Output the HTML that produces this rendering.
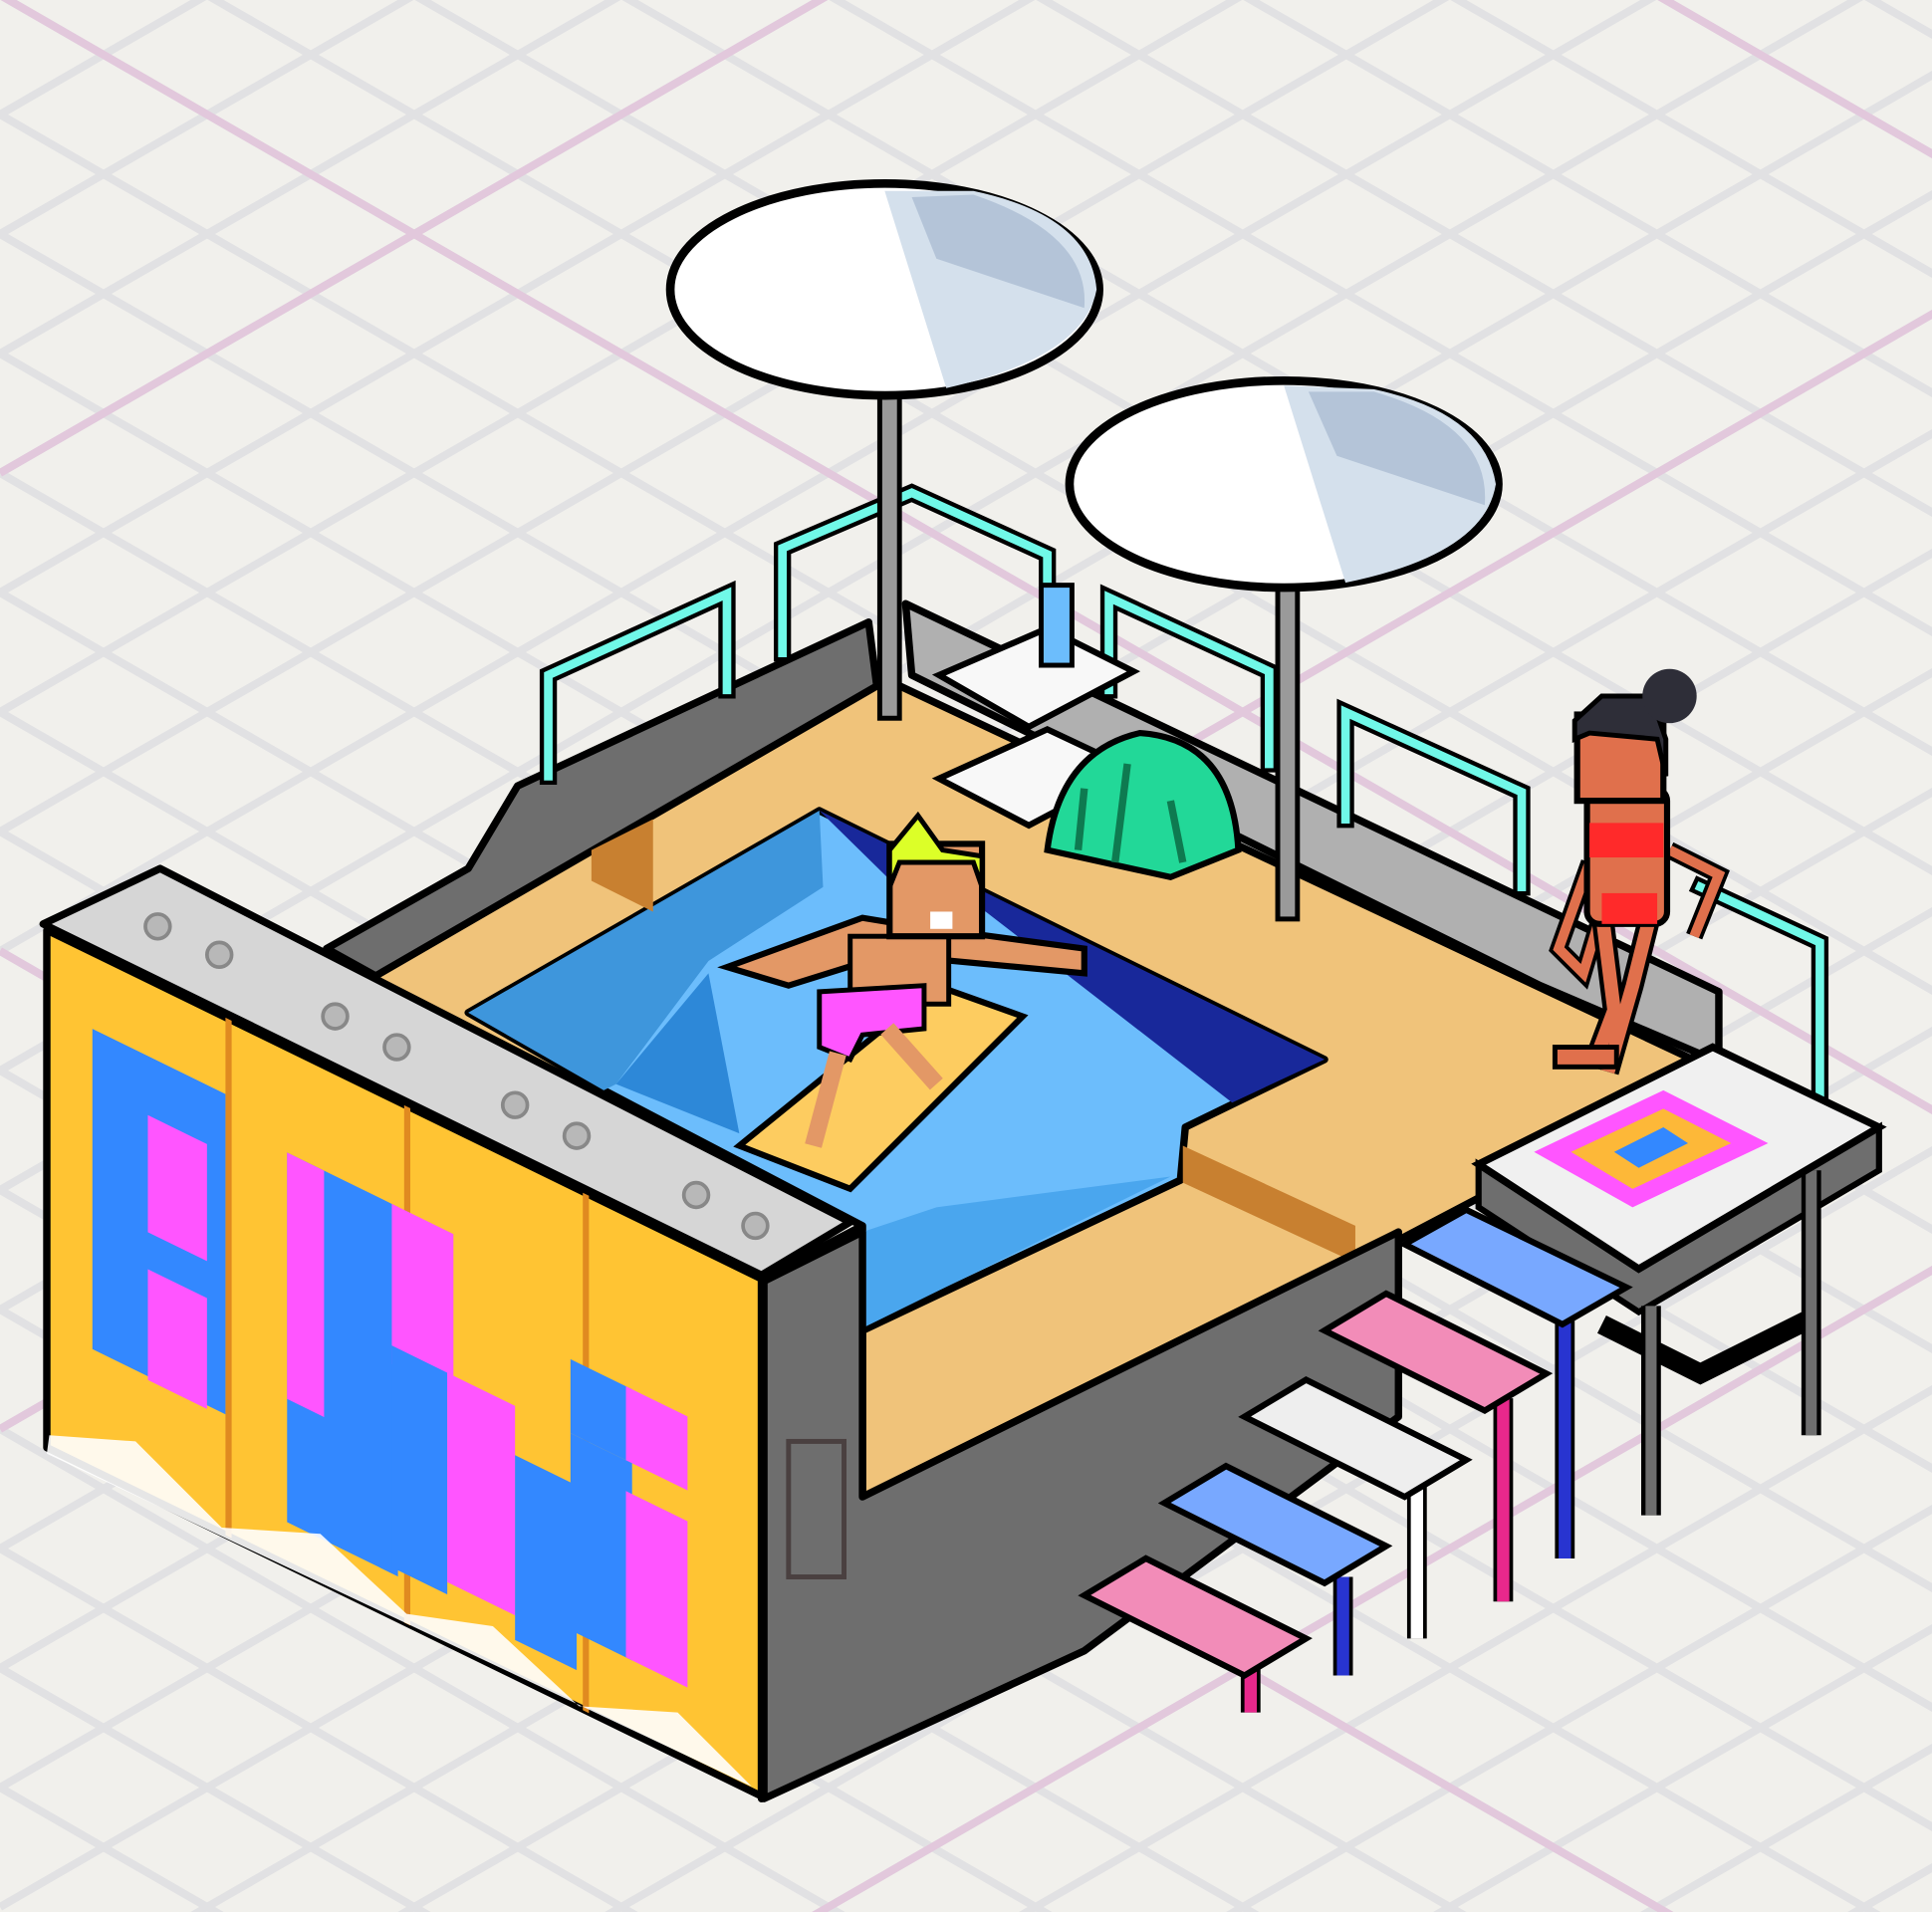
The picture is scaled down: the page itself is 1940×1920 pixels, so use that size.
<!DOCTYPE html>
<html><head><meta charset="utf-8"><style>
html,body{margin:0;padding:0;background:#f1f0ec;width:1940px;height:1920px;overflow:hidden;position:relative}
svg{position:absolute;left:0;top:0;display:block}
</style></head><body>
<svg width="1940" height="1920" viewBox="0 0 1940 1920">
<g stroke="#e1e1e3" stroke-width="8" fill="none">
<path d="M0 -245L2000 909M0 -125L2000 1029M0 -5L2000 1149M0 115L2000 1269M0 235L2000 1389M0 355L2000 1509M0 475L2000 1629M0 595L2000 1749M0 715L2000 1869M0 835L2000 1989M0 955L2000 2109M0 1075L2000 2229M0 1195L2000 2349M0 1315L2000 2469M0 1435L2000 2589M0 1555L2000 2709M0 1675L2000 2829M0 1795L2000 2949M0 -365L2000 789M0 -485L2000 669M0 -605L2000 549M0 -725L2000 429M0 -845L2000 309M0 -965L2000 189M0 -1085L2000 69M0 -1205L2000 -51"/>
<path d="M0 115L2000 -1039M0 235L2000 -919M0 355L2000 -799M0 475L2000 -679M0 595L2000 -559M0 715L2000 -439M0 835L2000 -319M0 955L2000 -199M0 1075L2000 -79M0 1195L2000 41M0 1315L2000 161M0 1435L2000 281M0 1555L2000 401M0 1675L2000 521M0 1795L2000 641M0 1915L2000 761M0 2035L2000 881M0 2155L2000 1001M0 2275L2000 1121M0 2395L2000 1241M0 2515L2000 1361M0 2635L2000 1481M0 2755L2000 1601M0 2875L2000 1721M0 2995L2000 1841M0 3115L2000 1961"/>
</g>
<g stroke="#e2c8dc" stroke-width="8" fill="none">
<path d="M0 -5L2000 1149M0 955L2000 2109M0 -965L2000 189M0 475L2000 -679M0 1435L2000 281M0 2395L2000 1241M0 3355L2000 2201"/>
</g>
</svg>
<svg width="1940" height="1920" viewBox="0 0 1568 1552" preserveAspectRatio="none">
<g stroke="#000" stroke-width="6" stroke-linejoin="round">
<polygon points="265,770 380,705 420,638 705,505 712,560 310,795" fill="#6e6e6e"/>
<polygon points="735,490 1395,805 1395,862 1250,800 740,548" fill="#b0b0b0"/>
<polygon points="300,795 720,552 1395,870 1100,1025 700,1218 700,995" fill="#f0c37a"/>
<polygon points="380,822 665,658 1075,860 962,915 958,958 700,1080 700,995 490,885" fill="#6cbdfc"/>
<polygon points="380,822 665,658 668,720 575,780 500,880 490,885" fill="#3e96dc" stroke="none"/>
<polygon points="665,658 1075,860 1000,895 800,740 720,712" fill="#18289a" stroke="none"/>
<polygon points="500,880 575,790 600,920" fill="#2d88d8" stroke="none"/>
<polygon points="700,1000 760,980 950,955 700,1078" fill="#4aa6ee" stroke="none"/>
<polygon points="480,690 530,665 530,740 480,715" fill="#c88030" stroke="none"/>
<polygon points="960,930 1100,995 1100,1025 960,960" fill="#c88030" stroke="none"/>
<polygon points="35,750 130,705 690,992 618,1035" fill="#d6d6d6"/>
<polygon points="38,755 618,1038 618,1458 38,1175" fill="#ffc433"/>
<polygon points="618,1038 696,997 696,1420 618,1460" fill="#6e6e6e"/>
<polygon points="700,1215 1135,1000 1135,1150 880,1340 620,1460 620,1040 700,1000" fill="#6e6e6e"/>
</g>
<g transform="matrix(1 0.49 0 1 38 755)">
<rect x="145" y="0" width="5" height="420" fill="#e08a20"/>
<rect x="290" y="0" width="5" height="420" fill="#e08a20"/>
<rect x="435" y="0" width="5" height="420" fill="#e08a20"/>
<rect x="37" y="62" width="108" height="260" fill="#3388ff"/>
<rect x="82" y="110" width="48" height="95" fill="#ff55ff"/>
<rect x="82" y="235" width="48" height="90" fill="#ff55ff"/>
<rect x="195" y="85" width="90" height="300" fill="#3388ff"/>
<rect x="195" y="85" width="30" height="200" fill="#ff55ff"/>
<rect x="280" y="85" width="50" height="130" fill="#ff55ff"/>
<rect x="280" y="200" width="45" height="180" fill="#3388ff"/>
<rect x="325" y="200" width="55" height="170" fill="#ff55ff"/>
<rect x="380" y="240" width="50" height="150" fill="#3388ff"/>
<rect x="425" y="140" width="50" height="60" fill="#3388ff"/>
<rect x="470" y="140" width="50" height="60" fill="#ff55ff"/>
<rect x="425" y="200" width="50" height="160" fill="#3388ff"/>
<rect x="470" y="225" width="50" height="135" fill="#ff55ff"/>
</g>
<g fill="#b8b8b8" stroke="#888" stroke-width="3">
<circle cx="128" cy="752" r="10"/><circle cx="178" cy="775" r="10"/>
<circle cx="272" cy="825" r="10"/><circle cx="322" cy="850" r="10"/>
<circle cx="418" cy="897" r="10"/><circle cx="468" cy="922" r="10"/>
<circle cx="565" cy="970" r="10"/><circle cx="613" cy="995" r="10"/>
</g>
<polygon points="40,1165 110,1170 180,1240 260,1245 330,1310 400,1320 470,1385 550,1390 610,1450 38,1180" fill="#ffffff" opacity="0.9"/>
<rect x="640" y="1170" width="45" height="110" fill="none" stroke="#4a4040" stroke-width="4"/>
<g fill="none" stroke-linecap="square">
<g stroke="#000" stroke-width="14">
<path d="M445,630 V548 L590,482 V560 M635,530 V445 L740,400 L850,450 V505 M900,560 V485 L1030,545 V620 M1092,665 V578 L1235,643 V720 M1380,720 L1477,765 V920"/>
</g>
<g stroke="#70f8e8" stroke-width="7">
<path d="M445,630 V548 L590,482 V560 M635,530 V445 L740,400 L850,450 V505 M900,560 V485 L1030,545 V620 M1092,665 V578 L1235,643 V720 M1380,720 L1477,765 V920"/>
</g>
</g>
<polygon points="762,548 850,510 920,545 835,590" fill="#f8f8f8" stroke="#000" stroke-width="5"/>
<polygon points="762,632 850,592 920,625 835,670" fill="#f8f8f8" stroke="#000" stroke-width="5"/>
<rect x="845" y="475" width="25" height="65" fill="#6cbdfc" stroke="#000" stroke-width="4"/>
<path d="M850,690 Q860,610 925,595 Q1000,600 1005,690 L950,712 Z" fill="#22d898" stroke="#000" stroke-width="5"/>
<path d="M880,640 L875,690 M915,620 L905,700 M950,650 L960,700" stroke="#0e7a50" stroke-width="6"/>
<rect x="714" y="318" width="16" height="265" fill="#9a9a9a" stroke="#000" stroke-width="4"/>
<rect x="1037" y="478" width="16" height="268" fill="#9a9a9a" stroke="#000" stroke-width="4"/>
<ellipse cx="718" cy="235" rx="174" ry="86" fill="#fff" stroke="#000" stroke-width="7"/>
<path d="M718,155 L768,315 Q880,290 890,235 Q885,175 790,155 Z" fill="#d4e0ec"/>
<path d="M740,160 L760,210 L880,250 Q885,190 790,158 Z" fill="#b4c4d8"/>
<ellipse cx="1042" cy="393" rx="174" ry="84" fill="#fff" stroke="#000" stroke-width="7"/>
<path d="M1042,313 L1092,473 Q1205,450 1214,393 Q1205,335 1115,316 Z" fill="#d4e0ec"/>
<path d="M1062,318 L1085,370 L1205,410 Q1210,345 1115,318 Z" fill="#b4c4d8"/>
<polygon points="600,930 760,800 830,825 690,965" fill="#fdcc60" stroke="#000" stroke-width="5"/>
<path d="M590,785 L700,745 L730,750 L880,770 L880,790 L720,775 L640,800 Z" fill="#e39866" stroke="#000" stroke-width="5"/>
<rect x="690" y="760" width="80" height="55" fill="#e39866" stroke="#000" stroke-width="4"/>
<polygon points="665,805 750,800 750,835 700,840 690,860 665,850" fill="#ff55ff" stroke="#000" stroke-width="4"/>
<path d="M680,855 L660,930 M720,835 L760,880" stroke="#e39866" stroke-width="14"/>
<rect x="722" y="685" width="75" height="75" fill="#e39866" stroke="#000" stroke-width="5"/>
<path d="M722,720 V690 L745,662 L765,690 L797,695 V720 L790,700 L730,700 Z" fill="#dcff28" stroke="#000" stroke-width="4"/>
<rect x="755" y="740" width="18" height="14" fill="#fff"/>
<!-- right table frame (behind steps) -->
<polygon points="1200,945 1330,1030 1525,915 1525,950 1330,1065 1200,980" fill="#6e6e6e" stroke="#000" stroke-width="5"/>
<path d="M1340,1060 V1230 M1470,950 V1165 M1300,1075 L1380,1115 L1470,1070" stroke="#000" stroke-width="16" fill="none"/>
<path d="M1340,1060 V1230 M1470,950 V1165" stroke="#6e6e6e" stroke-width="9"/>
<polygon points="1200,945 1390,850 1525,915 1330,1030" fill="#f0f0f0" stroke="#000" stroke-width="6"/>
<polygon points="1245,935 1350,885 1435,928 1325,980" fill="#ff55ff"/>
<polygon points="1275,935 1350,900 1405,928 1325,965" fill="#fdb838"/>
<polygon points="1310,935 1350,915 1370,928 1330,948" fill="#3388ff"/>
<g stroke="#000" stroke-width="5">
<path d="M1270,1070 V1265 M1220,1135 V1300 M1150,1205 V1330 M1090,1280 V1360 M1015,1345 V1390" stroke="#000" stroke-width="16"/>
<path d="M1270,1070 V1265" stroke="#2834d0" stroke-width="10"/>
<path d="M1220,1135 V1300 M1015,1345 V1390" stroke="#e8288c" stroke-width="10"/>
<path d="M1150,1205 V1330" stroke="#fff" stroke-width="10"/>
<path d="M1090,1280 V1360" stroke="#2834d0" stroke-width="10"/>
<polygon points="1140,1010 1190,982 1320,1045 1268,1075" fill="#78a8ff"/>
<polygon points="1075,1080 1125,1050 1255,1115 1205,1145" fill="#f28cb8"/>
<polygon points="1010,1150 1060,1120 1190,1185 1140,1215" fill="#eeeeee"/>
<polygon points="945,1220 995,1190 1125,1255 1075,1285" fill="#78a8ff"/>
<polygon points="880,1295 930,1265 1060,1330 1010,1360" fill="#f28cb8"/>
</g>
<path d="M1290,700 L1265,770 L1285,790 L1300,740 M1355,690 L1395,710 L1375,760" stroke="#000" stroke-width="14" fill="none"/>
<path d="M1290,700 L1265,770 L1285,790 L1300,740 M1355,690 L1395,710 L1375,760" stroke="#e0704c" stroke-width="8" fill="none"/>
<path d="M1300,740 L1310,820 L1295,860 M1340,740 L1325,800 L1305,870" stroke="#000" stroke-width="18" fill="none"/>
<path d="M1300,740 L1310,820 L1295,860 M1340,740 L1325,800 L1305,870" stroke="#e0704c" stroke-width="11" fill="none"/>
<rect x="1288" y="640" width="65" height="110" rx="10" fill="#e0704c" stroke="#000" stroke-width="5"/>
<rect x="1290" y="668" width="60" height="28" fill="#ff2a2a"/>
<rect x="1300" y="725" width="45" height="25" fill="#ff2a2a"/>
<rect x="1280" y="580" width="70" height="70" fill="#e0704c" stroke="#000" stroke-width="5"/>
<path d="M1278,600 V585 L1300,565 L1340,565 L1352,600 L1352,630 L1345,600 L1290,595 Z" fill="#2e2e38" stroke="#000" stroke-width="4"/>
<circle cx="1355" cy="565" r="22" fill="#2e2e38"/>
<rect x="1262" y="850" width="50" height="16" fill="#e0704c" stroke="#000" stroke-width="4"/>
</svg>
</body></html>
